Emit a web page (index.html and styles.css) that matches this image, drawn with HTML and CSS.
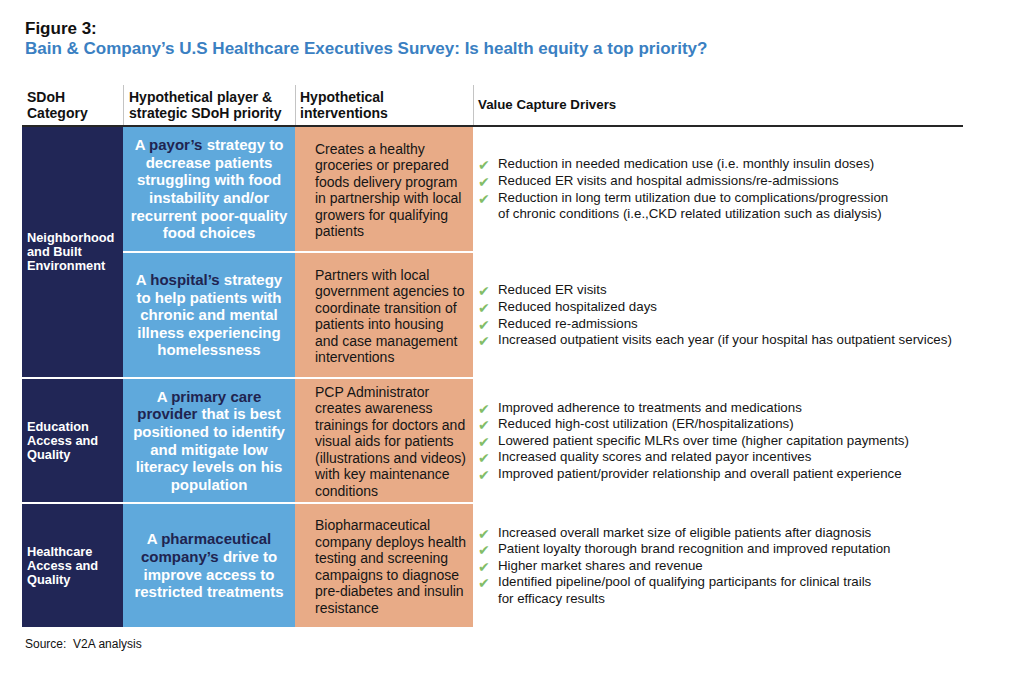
FILE: index.html
```html
<!DOCTYPE html>
<html lang="en">
<head>
<meta charset="utf-8">
<title>Figure 3</title>
<link rel="stylesheet" href="styles.css">
</head>
<body>
<div class="figure">
  <div class="fig-label">Figure 3:</div>
  <div class="fig-title">Bain &amp; Company’s U.S Healthcare Executives Survey: Is health equity a top priority?</div>

  <div class="table">
    <div class="thead">
      <div class="th th-cat"><div>SDoH<br>Category</div></div>
      <div class="th th-player"><div>Hypothetical player &amp;<br>strategic SDoH priority</div></div>
      <div class="th th-int"><div>Hypothetical<br>interventions</div></div>
      <div class="th th-val"><div>Value Capture Drivers</div></div>
    </div>

    <div class="tbody">
      <div class="cat cat-r12"><div>Neighborhood<br>and Built<br>Environment</div></div>
      <div class="player r1"><div>A <span class="hl">payor’s</span> strategy to<br>decrease patients<br>struggling with food<br>instability and/or<br>recurrent poor-quality<br>food choices</div></div>
      <div class="int r1"><div>Creates a healthy<br>groceries or prepared<br>foods delivery program<br>in partnership with local<br>growers for qualifying<br>patients</div></div>
      <ul class="val r1">
        <li>Reduction in needed medication use (i.e. monthly insulin doses)</li>
        <li>Reduced ER visits and hospital admissions/re-admissions</li>
        <li>Reduction in long term utilization due to complications/progression<br>of chronic conditions (i.e.,CKD related utilization such as dialysis)</li>
      </ul>

      <div class="player r2"><div>A <span class="hl">hospital’s</span> strategy<br>to help patients with<br>chronic and mental<br>illness experiencing<br>homelessness</div></div>
      <div class="int r2"><div>Partners with local<br>government agencies to<br>coordinate transition of<br>patients into housing<br>and case management<br>interventions</div></div>
      <ul class="val r2">
        <li>Reduced ER visits</li>
        <li>Reduced hospitalized days</li>
        <li>Reduced re-admissions</li>
        <li>Increased outpatient visits each year (if your hospital has outpatient services)</li>
      </ul>

      <div class="cat r3"><div>Education<br>Access and<br>Quality</div></div>
      <div class="player r3"><div>A <span class="hl">primary care</span><br><span class="hl">provider</span> that is best<br>positioned to identify<br>and mitigate low<br>literacy levels on his<br>population</div></div>
      <div class="int r3"><div>PCP Administrator<br>creates awareness<br>trainings for doctors and<br>visual aids for patients<br>(illustrations and videos)<br>with key maintenance<br>conditions</div></div>
      <ul class="val r3">
        <li>Improved adherence to treatments and medications</li>
        <li>Reduced high-cost utilization (ER/hospitalizations)</li>
        <li>Lowered patient specific MLRs over time (higher capitation payments)</li>
        <li>Increased quality scores and related payor incentives</li>
        <li>Improved patient/provider relationship and overall patient experience</li>
      </ul>

      <div class="cat r4"><div>Healthcare<br>Access and<br>Quality</div></div>
      <div class="player r4"><div>A <span class="hl">pharmaceutical</span><br><span class="hl">company’s</span> drive to<br>improve access to<br>restricted treatments</div></div>
      <div class="int r4"><div>Biopharmaceutical<br>company deploys health<br>testing and screening<br>campaigns to diagnose<br>pre-diabetes and insulin<br>resistance</div></div>
      <ul class="val r4">
        <li>Increased overall market size of eligible patients after diagnosis</li>
        <li>Patient loyalty thorough brand recognition and improved reputation</li>
        <li>Higher market shares and revenue</li>
        <li>Identified pipeline/pool of qualifying participants for clinical trails<br>for efficacy results</li>
      </ul>
    </div>
  </div>

  <div class="source">Source:&nbsp; V2A analysis</div>
</div>
</body>
</html>
```

FILE: styles.css
```css
* { box-sizing: border-box; }

html, body {
  margin: 0;
  padding: 0;
  background: #ffffff;
}

body {
  font-family: "Liberation Sans", Arial, Helvetica, sans-serif;
  color: #111111;
}

.figure {
  padding: 19px 0 0 22px;
}

.fig-label {
  margin-left: 3px;
  font-size: 17px;
  line-height: 20px;
  font-weight: bold;
  color: #111111;
}

.fig-title {
  margin-left: 3px;
  font-size: 17px;
  line-height: 19px;
  font-weight: bold;
  color: #3a80c2;
}

.table {
  margin-top: 27px;
  width: 941px;
}

.thead {
  display: grid;
  grid-template-columns: 101px 172px 178px 490px;
  height: 42px;
  border-bottom: 2px solid #262626;
}

.th {
  display: flex;
  align-items: center;
  font-size: 14px;
  line-height: 16px;
  font-weight: bold;
  color: #111111;
  white-space: nowrap;
}

.th-cat { padding-left: 5px; }

.th-player,
.th-int,
.th-val {
  border-left: 1px solid #c4c4c4;
}

.th-player { padding-left: 5px; }
.th-int { padding-left: 4px; }
.th-val { padding-left: 4px; font-size: 13.3px; }

.tbody {
  display: grid;
  grid-template-columns: 101px 172px 178px 490px;
  grid-template-rows: 124px 124px 123px 123px;
  row-gap: 2px;
}

.r1 { grid-row: 1; }
.r2 { grid-row: 2; }
.r3 { grid-row: 3; }
.r4 { grid-row: 4; }
.cat-r12 { grid-row: 1 / 3; }

.cat {
  grid-column: 1;
  background: #212656;
  color: #ffffff;
  font-size: 12.8px;
  line-height: 14px;
  font-weight: bold;
  padding-left: 5px;
  display: flex;
  align-items: center;
  white-space: nowrap;
}

.player {
  grid-column: 2;
  background: #5fa9dc;
  color: #ffffff;
  font-size: 15px;
  line-height: 17.6px;
  font-weight: bold;
  text-align: center;
  display: flex;
  align-items: center;
  justify-content: center;
  white-space: nowrap;
}

.hl { color: #1f2450; }

.int {
  grid-column: 3;
  background: #e8ab87;
  color: #151515;
  font-size: 14px;
  line-height: 16.5px;
  padding: 2px 0 0 20px;
  display: flex;
  align-items: center;
  white-space: nowrap;
}

.val {
  grid-column: 4;
  margin: 0;
  padding: 1px 0 0 5px;
  list-style: none;
  display: flex;
  flex-direction: column;
  justify-content: center;
  font-size: 13.3px;
  line-height: 16.6px;
  color: #151515;
  white-space: nowrap;
}

.val li {
  position: relative;
  padding-left: 20px;
}

.val li::before {
  content: "\2714";
  position: absolute;
  left: 0;
  top: 1px;
  font-family: "DejaVu Sans", sans-serif;
  font-size: 14px;
  line-height: 16px;
  color: #82bd68;
}

.source {
  margin-top: 10px;
  margin-left: 3px;
  font-size: 12px;
  line-height: 14px;
  color: #111111;
}
```
